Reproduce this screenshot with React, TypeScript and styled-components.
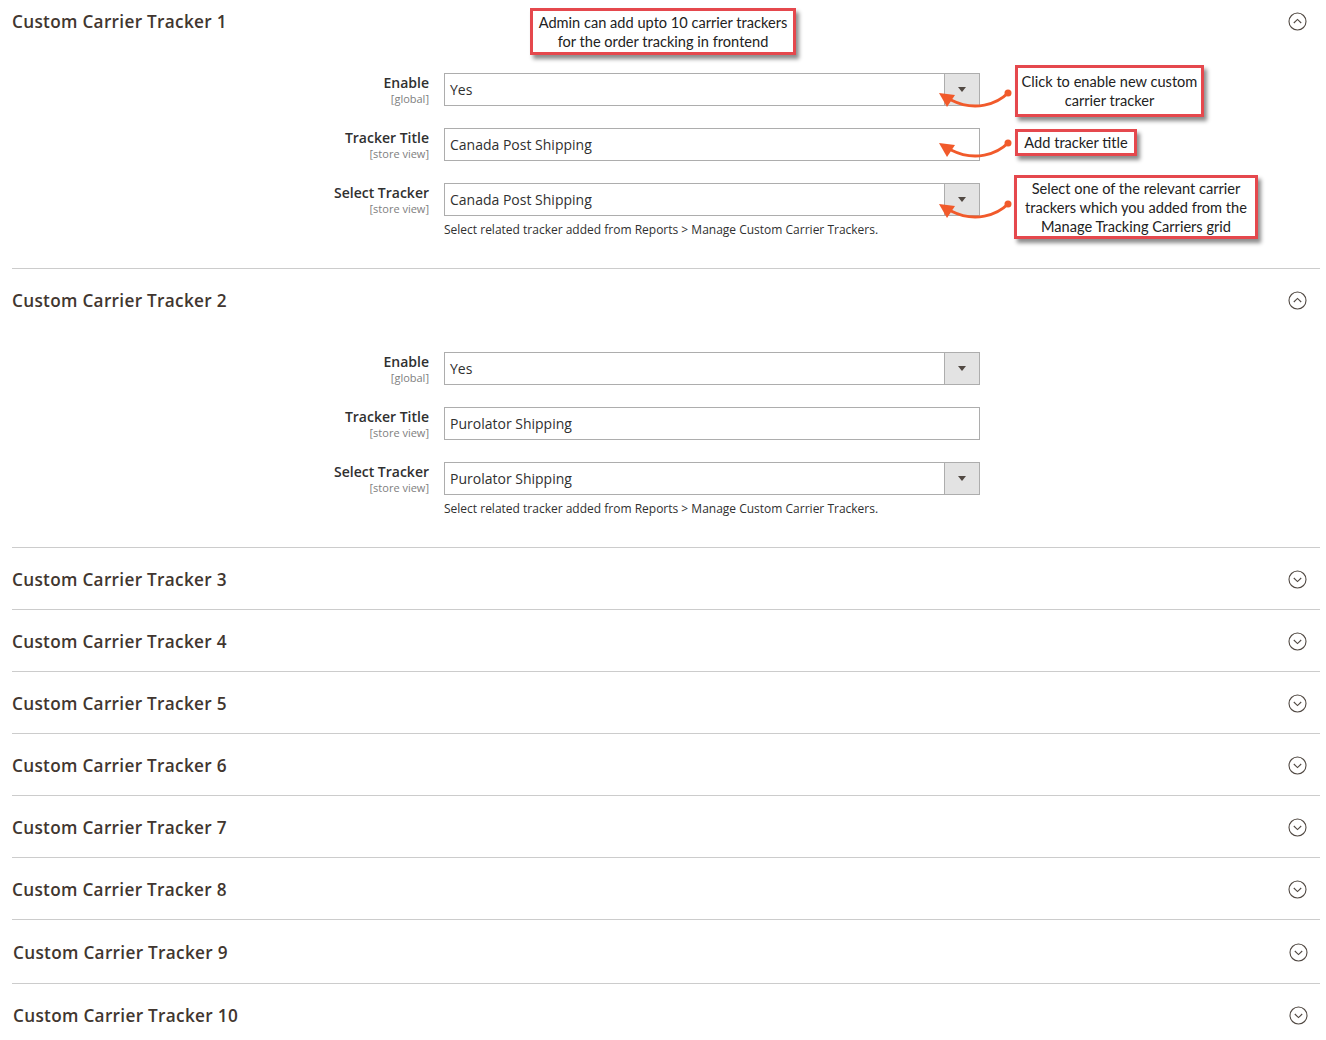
import React from "react";
import styled, { createGlobalStyle } from "styled-components";

const GlobalStyle = createGlobalStyle`
  html, body {
    margin: 0;
    padding: 0;
    background: #ffffff;
  }
  body {
    font-family: "Open Sans", "Liberation Sans", sans-serif;
    color: #303030;
  }
`;

const Page = styled.div`
  position: relative;
  width: 1326px;
  height: 1040px;
  overflow: hidden;
  padding: 0 6px 0 12px;
  box-sizing: border-box;
`;

const Section = styled.section<{ $last?: boolean }>`
  border-bottom: ${(p) => (p.$last ? "none" : "1px solid #cccccc")};
`;

const SectionHeader = styled.div<{ $first?: boolean; $tall?: boolean; $shift?: boolean }>`
  display: flex;
  align-items: center;
  justify-content: space-between;
  height: ${(p) => (p.$first ? "51px" : p.$tall ? "63px" : "61px")};
  padding: ${(p) => (p.$first ? "0 13px 9px 0" : p.$shift ? "2px 12px 0 1px" : "2px 13px 0 0")};
  box-sizing: border-box;
`;

const SectionTitle = styled.h3`
  margin: 0;
  font-size: 17.2px;
  font-weight: 600;
  color: #41362f;
  letter-spacing: 0.3px;
`;

const Fields = styled.div`
  display: flex;
  flex-direction: column;
  gap: 22px;
  padding: 22px 0 30px;
`;

const FieldRow = styled.div`
  display: grid;
  grid-template-columns: 417px 536px;
  column-gap: 15px;
`;

const LabelCell = styled.div`
  display: flex;
  flex-direction: column;
  align-items: flex-end;
  padding-top: 1px;
`;

const LabelText = styled.span`
  font-size: 14px;
  font-weight: 600;
  color: #303030;
  line-height: 18px;
`;

const Scope = styled.span`
  font-size: 11px;
  color: #808080;
  line-height: 13px;
`;

const Control = styled.div`
  display: flex;
  flex-direction: column;
  gap: 6px;
`;

const InputBox = styled.div`
  display: flex;
  height: 33px;
  border: 1px solid #adadad;
  box-sizing: border-box;
  background: #ffffff;
`;

const InputValue = styled.span`
  flex: 1;
  display: flex;
  align-items: center;
  padding-left: 5px;
  font-size: 14px;
  color: #303030;
`;

const SelectButton = styled.span`
  width: 34px;
  display: flex;
  align-items: center;
  justify-content: center;
  background: #e3e3e3;
  border-left: 1px solid #adadad;
  &::after {
    content: "";
    border-left: 4px solid transparent;
    border-right: 4px solid transparent;
    border-top: 5px solid #514943;
  }
`;

const Note = styled.div`
  font-size: 12px;
  color: #303030;
  line-height: 16px;
`;

const Callout = styled.div<{ $x: number; $y: number; $w: number; $h: number }>`
  position: absolute;
  left: ${(p) => p.$x}px;
  top: ${(p) => p.$y}px;
  width: ${(p) => p.$w}px;
  height: ${(p) => p.$h}px;
  box-sizing: border-box;
  border: 3px solid #e5484d;
  background: #ffffff;
  box-shadow: 3px 4px 4px rgba(0, 0, 0, 0.45);
  display: flex;
  align-items: center;
  justify-content: center;
  text-align: center;
  font-family: Lato, "Open Sans", sans-serif;
  font-size: 14.6px;
  line-height: 19px;
  color: #222222;
`;

const ArrowSvg = styled.svg<{ $x: number; $y: number }>`
  position: absolute;
  left: ${(p) => p.$x}px;
  top: ${(p) => p.$y}px;
  overflow: visible;
`;

const CurvedArrow = ({ x, y }: { x: number; y: number }) => (
  <ArrowSvg $x={x} $y={y} width="80" height="26" viewBox="0 0 80 26">
    <path
      d="M73 5 C62 16 40 24 16 12"
      fill="none"
      stroke="#f15a2b"
      strokeWidth="3"
      strokeLinecap="round"
    />
    <polygon points="4,5 20,7 12,19" fill="#f15a2b" />
    <circle cx="73" cy="5" r="3.5" fill="#f15a2b" />
  </ArrowSvg>
);

const ToggleIcon = ({ open }: { open: boolean }) => (
  <svg width="19" height="19" viewBox="0 0 19 19">
    <circle cx="9.5" cy="9.5" r="8.5" fill="none" stroke="#514943" strokeWidth="1.1" />
    <path
      d={open ? "M5.8 11 L9.5 7.4 L13.2 11" : "M5.8 8 L9.5 11.6 L13.2 8"}
      fill="none"
      stroke="#514943"
      strokeWidth="1.1"
    />
  </svg>
);

type Field = {
  label: string;
  scope: string;
  value: string;
  select?: boolean;
  note?: string;
};

const noteText = "Select related tracker added from Reports > Manage Custom Carrier Trackers.";

const makeFields = (title: string): Field[] => [
  { label: "Enable", scope: "[global]", value: "Yes", select: true },
  { label: "Tracker Title", scope: "[store view]", value: title },
  { label: "Select Tracker", scope: "[store view]", value: title, select: true, note: noteText },
];

const sections = [
  { n: 1, fields: makeFields("Canada Post Shipping") },
  { n: 2, fields: makeFields("Purolator Shipping") },
  ...[3, 4, 5, 6, 7, 8, 9, 10].map((n) => ({ n, fields: [] as Field[] })),
];

const App: React.FC = () => {
  return (
    <>
      <GlobalStyle />
      <Page>
        {sections.map((s, i) => {
          const open = s.fields.length > 0;
          return (
            <Section key={s.n} $last={i === sections.length - 1}>
              <SectionHeader $first={i === 0} $tall={s.n === 9} $shift={s.n >= 9}>
                <SectionTitle>Custom Carrier Tracker {s.n}</SectionTitle>
                <ToggleIcon open={open} />
              </SectionHeader>
              {open && (
                <Fields>
                  {s.fields.map((f) => (
                    <FieldRow key={f.label}>
                      <LabelCell>
                        <LabelText>{f.label}</LabelText>
                        <Scope>{f.scope}</Scope>
                      </LabelCell>
                      <Control>
                        <InputBox>
                          <InputValue>{f.value}</InputValue>
                          {f.select && <SelectButton />}
                        </InputBox>
                        {f.note && <Note>{f.note}</Note>}
                      </Control>
                    </FieldRow>
                  ))}
                </Fields>
              )}
            </Section>
          );
        })}

        <Callout $x={530} $y={8} $w={266} $h={47}>
          Admin can add upto 10 carrier trackers
          <br />
          for the order tracking in frontend
        </Callout>
        <Callout $x={1015} $y={65} $w={189} $h={52}>
          Click to enable new custom
          <br />
          carrier tracker
        </Callout>
        <Callout $x={1015} $y={129} $w={122} $h={27}>
          Add tracker title
        </Callout>
        <Callout $x={1014} $y={175} $w={244} $h={64}>
          Select one of the relevant carrier
          <br />
          trackers which you added from the
          <br />
          Manage Tracking Carriers grid
        </Callout>

        <CurvedArrow x={935} y={88} />
        <CurvedArrow x={935} y={138} />
        <CurvedArrow x={935} y={199} />
      </Page>
    </>
  );
};

export default App;
